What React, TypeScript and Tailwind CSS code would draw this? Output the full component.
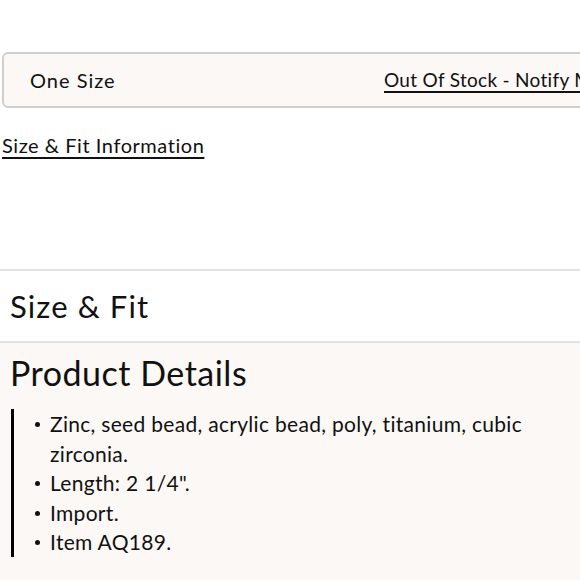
const font = { fontFamily: '"Lato", "Noto Sans", sans-serif' };

const details = [
  'Zinc, seed bead, acrylic bead, poly, titanium, cubic zirconia.',
  'Length: 2 1/4".',
  'Import.',
  'Item AQ189.',
];

export default function App() {
  return (
    <div className="w-[580px] h-[580px] overflow-hidden bg-white text-[#111]" style={font}>
      <div className="w-[760px] pt-[52px] pl-[2px]">
        <div className="grid grid-cols-[380px_1fr] items-center h-[56px] rounded-l-[6px] border-2 border-[#cfcfcf] bg-[#fbf8f5]">
          <div className="pl-[26px] text-[20px] tracking-[1px]">One Size</div>
          <a className="text-[19px] tracking-[0.3px] underline underline-offset-[4px] decoration-[1.5px]">
            Out Of Stock - Notify Me
          </a>
        </div>
        <a className="block mt-[22px] text-[20px] tracking-[0.55px] underline underline-offset-[4px] decoration-[1.5px] w-max">
          Size &amp; Fit Information
        </a>
      </div>

      <div className="mt-[109px] border-t-2 border-[#e2e2e2]">
        <h2 className="h-[70px] flex items-center px-[10px] text-[31px] tracking-[1.1px]">Size &amp; Fit</h2>
      </div>

      <div className="border-t-2 border-[#e2e2e2] bg-[#fbf8f5] h-[300px] px-[10px] pt-[10px]">
        <h2 className="text-[34px] leading-[40px] tracking-[0.5px]">Product Details</h2>
        <ul className="mt-[16px] ml-[1px] w-[530px] border-l-[3px] border-black text-[21px] leading-[29.5px] tracking-[0.3px]">
          {details.map((d) => (
            <li key={d} className="flex">
              <span className="w-[36px] shrink-0 flex justify-end pr-[10px] pt-[13px]">
                <span className="block w-[5px] h-[5px] rounded-full bg-[#111]" />
              </span>
              <span>{d}</span>
            </li>
          ))}
        </ul>
      </div>
    </div>
  );
}
